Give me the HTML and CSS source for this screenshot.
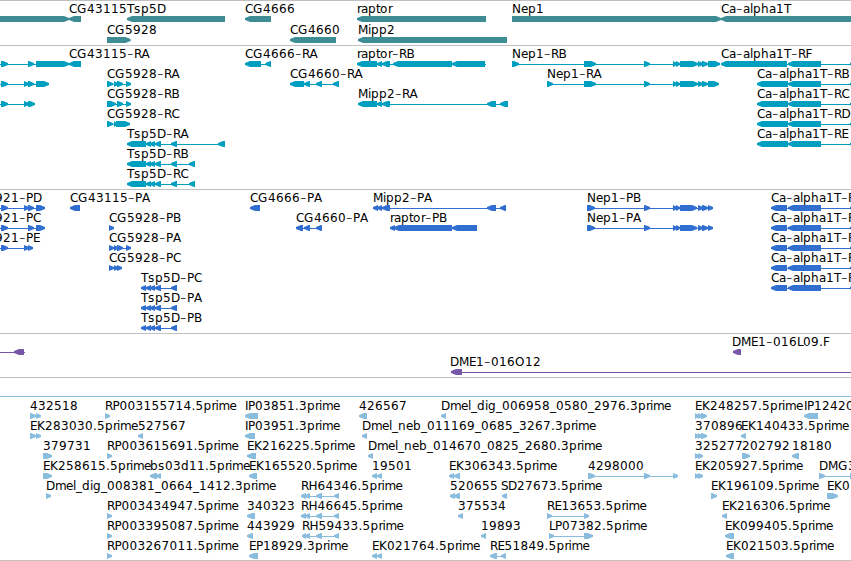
FILE: index.html
```html
<!DOCTYPE html>
<html lang="en">
<head>
<meta charset="utf-8">
<title>Genome browser</title>
<link rel="stylesheet" href="styles.css">
</head>
<body>
<main class="browser">
  <section class="track genes"><svg id="genes" viewBox="0 1 851 44"></svg></section>
  <section class="track transcripts"><svg id="transcripts" viewBox="0 46 851 143"></svg></section>
  <section class="track proteins"><svg id="proteins" viewBox="0 190 851 143"></svg></section>
  <section class="track clones"><svg id="clones" viewBox="0 334 851 43"></svg></section>
  <section class="track ests"><svg id="ests" viewBox="0 378 851 182"></svg></section>
</main>
<script src="tracks.js"></script>
</body>
</html>
```
FILE: styles.css
```css
body {
  margin: 0;
  background: #fff;
  overflow: hidden;
}
.browser {
  display: flex;
  flex-direction: column;
  width: 851px;
  height: 561px;
  box-sizing: border-box;
  border-bottom: 1px solid #c0c0c0;
}
.track {
  box-sizing: border-box;
  border-top: 1px solid #c0c0c0;
}
.track svg {
  display: block;
  width: 100%;
  height: 100%;
  overflow: visible;
}
.track text {
  font: 12px "DejaVu Sans", sans-serif;
  fill: #000;
}
.track .dash {
  font-size: 18px;
  font-weight: 200;
  baseline-shift: -1px;
}
.genes { height: 45px; fill: #3f8d94; }
.transcripts { height: 144px; fill: #009ebf; }
.proteins { height: 144px; fill: #306ecf; }
.clones { height: 44px; fill: #7757a8; }
.ests { height: 183px; fill: #8abddd; }
```
FILE: tracks.js
```js
// Feature: [label, label x, top, direction, exons "start-end ...", line start, line end]
const nep = '584-596 644-650 673-677 676-680 680-698 698-703 702-708 ';
const nepP = '587-595 644-650 673-677 676-680 680-697 698-703 702-708 708-713';
const tsp = '146-151 150-155 155-161 171-177';
const rh = '-306 305-310 316-322 334-339';
const tracks = {
  genes: [
    ['', 0, 16, '>', '-20-69'],
    ['CG43115', 69, 16, '<', '69-81'],
    ['Tsp5D', 127, 16, '<', '127-225'],
    ['CG4666', 245, 16, '<', '245-271'],
    ['raptor', 357, 16, '<', '357-486'],
    ['Nep1', 512, 16, '>', '512-721'],
    ['Ca-alpha1T', 721, 16, '<', '721-870'],
    ['CG5928', 107, 37, '>', '107-130.5'],
    ['CG4660', 290, 37, '<', '290-336'],
    ['Mipp2', 358, 37, '<', '358-507']
  ],
  transcripts: [
    ['', 0, 61, '>', '1-8 28-34 36-69', 0],
    ['CG43115-RA', 69, 61, '<', '69-81'],
    ['CG4666-RA', 245, 61, '<', '245-261 265.5-271'],
    ['raptor-RB', 357, 61, '<', '357-377 377-382 382-390 393-452 452-485', 357, 486],
    ['Nep1-RB', 512, 61, '>', '512-519 ' + nep + '708-720'],
    ['Ca-alpha1T-RF', 721, 61, '<', '721-787 788-821 850-856'],
    ['', 0, 81, '>', '1-8 24-29 28-34 36-49', 0],
    ['CG5928-RA', 107, 81, '>', '107-113 114-118 117-123 126-131'],
    ['CG4660-RA', 290, 81, '<', '290-304 304-310 316-322 333-339'],
    ['Nep1-RA', 547, 81, '>', '547-553 ' + nep + '708-719'],
    ['Ca-alpha1T-RB', 757, 81, '<', '757-788 788-821 850-856'],
    ['', 0, 101, '>', '1-8 24-29 28-35', 0],
    ['CG5928-RB', 107, 101, '>', '107-116 117-123 126-131'],
    ['Mipp2-RA', 358, 101, '<', '358-377 377-382 382-390 487-496 500-508'],
    ['Ca-alpha1T-RC', 757, 101, '<', '757-788 788-821 850-856'],
    ['CG5928-RC', 107, 121, '>', '107-113 114-117 116-130'],
    ['Ca-alpha1T-RD', 757, 121, '<', '757-788 788-821 850-856'],
    ['Tsp5D-RA', 127, 141, '<', '127-146 ' + tsp + ' 218-225'],
    ['Ca-alpha1T-RE', 757, 141, '<', '757-788 788-821 850-856'],
    ['Tsp5D-RB', 127, 161, '<', '127-146 ' + tsp + ' 189-195'],
    ['Tsp5D-RC', 127, 181, '<', '127-146 ' + tsp + ' 189-195']
  ],
  proteins: [
    ['921-PD', -5, 205, '>', '1-8 24-29 28-34 36-45', 0],
    ['CG43115-PA', 70, 205, '<', '70-80'],
    ['CG4666-PA', 250, 205, '<', '250-260'],
    ['Mipp2-PA', 373, 205, '<', '373-378 377-382 382-390 487-496 500-506'],
    ['Nep1-PB', 587, 205, '>', nepP],
    ['Ca-alpha1T-PF', 771, 205, '<', '771-787 788-821 850-856'],
    ['921-PC', -5, 225, '>', '1-8 28-34 36-45', 0],
    ['CG5928-PB', 109, 225, '>', '109-114'],
    ['CG4660-PA', 296, 225, '<', '296-303 304-310 316-322'],
    ['raptor-PB', 390, 225, '<', '390-395 394-452 452-477'],
    ['Nep1-PA', 587, 225, '>', nepP],
    ['Ca-alpha1T-PB', 771, 225, '<', '771-787 788-821 850-856'],
    ['921-PE', -5, 245, '>', '1-8 24-29 28-33', 0],
    ['CG5928-PA', 109, 245, '>', '109-114 114-118 117-123 126-131'],
    ['Ca-alpha1T-PC', 771, 245, '<', '771-787 788-821 850-856'],
    ['CG5928-PC', 109, 265, '>', '109-114 114-118 117-122'],
    ['Ca-alpha1T-PD', 771, 265, '<', '771-787 788-821 850-856'],
    ['Tsp5D-PC', 141, 285, '<', '141-146 ' + tsp],
    ['Ca-alpha1T-PE', 771, 285, '<', '771-787 788-821 850-856'],
    ['Tsp5D-PA', 141, 305, '<', '141-146 ' + tsp],
    ['Tsp5D-PB', 141, 325, '<', '141-146 ' + tsp]
  ],
  clones: [
    ['', 0, 349, '<', '14-24', 0, 25],
    ['DME1-016L09.F', 732, 349, '<', '733-741'],
    ['DME1-016O12', 450, 369, '<', '451-462', 451, 851]
  ],
  ests: [
    ['', 0, 393, '>', '', 0, 851],
    ['432518', 30, 413, '>', '30-36 36-41'],
    ['RP003155714.5prime', 105, 413, '>', '105-110'],
    ['IP03851.3prime', 245, 413, '<', '245-258'],
    ['426567', 359, 413, '<', '359-367'],
    ['Dmel_dig_006958_0580_2976.3prime', 441, 413, '<', '441-446'],
    ['EK248257.5prime', 695, 413, '>', '695-699 698-702 701-707'],
    ['IP12420.5prime', 804, 413, '<', '804-818'],
    ['EK283030.5prime', 30, 433, '>', '30-36 36-41'],
    ['527567', 138, 433, '<', '138-143'],
    ['IP03951.3prime', 245, 433, '<', '245-255'],
    ['Dmel_neb_011169_0685_3267.3prime', 362, 433, '<', '362-367'],
    ['370896', 695, 433, '>', '695-699 698-702 701-707'],
    ['EK140433.5prime', 741, 433, '<', '741-746'],
    ['379731', 43, 453, '>', '43-52'],
    ['RP003615691.5prime', 107, 453, '>', '107-112'],
    ['EK216225.5prime', 247, 453, '<', '247-256'],
    ['Dmel_neb_014670_0825_2680.3prime', 368, 453, '<', '368-373'],
    ['325277', 695, 453, '>', '695-699 698-703'],
    ['202792', 742, 453, '>', '742-750'],
    ['18180', 792, 453, '<', '792-799'],
    ['EK258615.5prime', 43, 473, '>', '43-52'],
    ['bs03d11.5prime', 150, 473, '<', '150-157 156-161'],
    ['EK165520.5prime', 249, 473, '<', '249-257'],
    ['19501', 372, 473, '<', '372-377 377-382'],
    ['EK306343.5prime', 449, 473, '<', '449-454 454-460'],
    ['4298000', 588, 473, '>', '588-595 644-650 673-678'],
    ['EK205927.5prime', 695, 473, '>', '695-699 698-703'],
    ['DMG3', 819, 473, '>', '819-825 850-856'],
    ['Dmel_dig_008381_0664_1412.3prime', 46, 493, '>', '46-51'],
    ['RH64346.5prime', 301, 493, '<', '301' + rh],
    ['520655', 450, 493, '<', '450-455 454-460'],
    ['SD27673.5prime', 501, 493, '<', '502-507'],
    ['EK196109.5prime', 711, 493, '>', '711-717'],
    ['EK0', 827, 493, '>', '827-838'],
    ['RP003434947.5prime', 107, 513, '>', '107-112'],
    ['340323', 247, 513, '<', '247-255'],
    ['RH46645.5prime', 301, 513, '<', '301' + rh],
    ['375534', 458, 513, '<', '458-463'],
    ['RE13653.5prime', 547, 513, '>', '547-552 584-589'],
    ['EK216306.5prime', 722, 513, '<', '722-727'],
    ['RP003395087.5prime', 107, 533, '>', '107-112'],
    ['443929', 247, 533, '<', '247-253'],
    ['RH59433.5prime', 302, 533, '<', '302' + rh],
    ['19893', 481, 533, '<', '481-486'],
    ['LP07382.5prime', 549, 533, '>', '549-554 584-593'],
    ['EK099405.5prime', 725, 533, '<', '725-734'],
    ['RP003267011.5prime', 107, 553, '>', '107-112'],
    ['EP18929.3prime', 249, 553, '<', '249-258'],
    ['EK021764.5prime', 372, 553, '<', '372-377 377-382'],
    ['RE51849.5prime', 490, 553, '<', '490-497 501-506'],
    ['EK021503.5prime', 726, 553, '<', '726-734']
  ]
};

// Whole-pixel advance of each character
const advance = {
  '.': 4, '_': 6, '-': 7, A: 8, B: 8, C: 8, D: 9, E: 7, F: 7, G: 10, H: 9, I: 3, K: 8,
  L: 6, M: 10, N: 9, O: 10, P: 7, R: 7.5, S: 7, T: 7, a: 7, b: 8, d: 8, e: 7, g: 8, h: 8,
  i: 3, l: 3, m: 11, n: 8, o: 8, p: 8, r: 4, s: 7, t: 4
};

function arrow(a, b, top, dir) {
  const head = Math.min(5, b - a);
  const [tip, neck, tail] = dir === '<' ? [a, a + head, b] : [b, b - head, a];
  return `<polygon points="${tip},${top + 2} ${neck},${top} ${tail},${top} ${tail},${top + 6} ${neck},${top + 6} ${tip},${top + 4}"/>`;
}

function feature([label, x, top, dir, exons, from, to]) {
  const spans = [...exons.matchAll(/(-?[\d.]+)-([\d.]+)/g)].map(m => [+m[1], +m[2]]);
  const start = from ?? spans[0][0];
  const end = to ?? spans[spans.length - 1][1];
  let out = `<rect x="${start}" y="${top + 3}" width="${end - start}" height="1"/>`;
  out += spans.map(([a, b]) => arrow(a, b, top, dir)).join('');
  if (label) {
    const xs = [];
    let pen = x;
    for (const c of label) {
      xs.push(pen);
      pen += advance[c] ?? 8;
    }
    out += `<text x="${xs.join(' ')}" y="${top - 3}">${label.replace(/-/g, '<tspan class="dash">-</tspan>')}</text>`;
  }
  return out;
}

for (const id in tracks) {
  document.getElementById(id).innerHTML = tracks[id].map(feature).join('');
}
```
